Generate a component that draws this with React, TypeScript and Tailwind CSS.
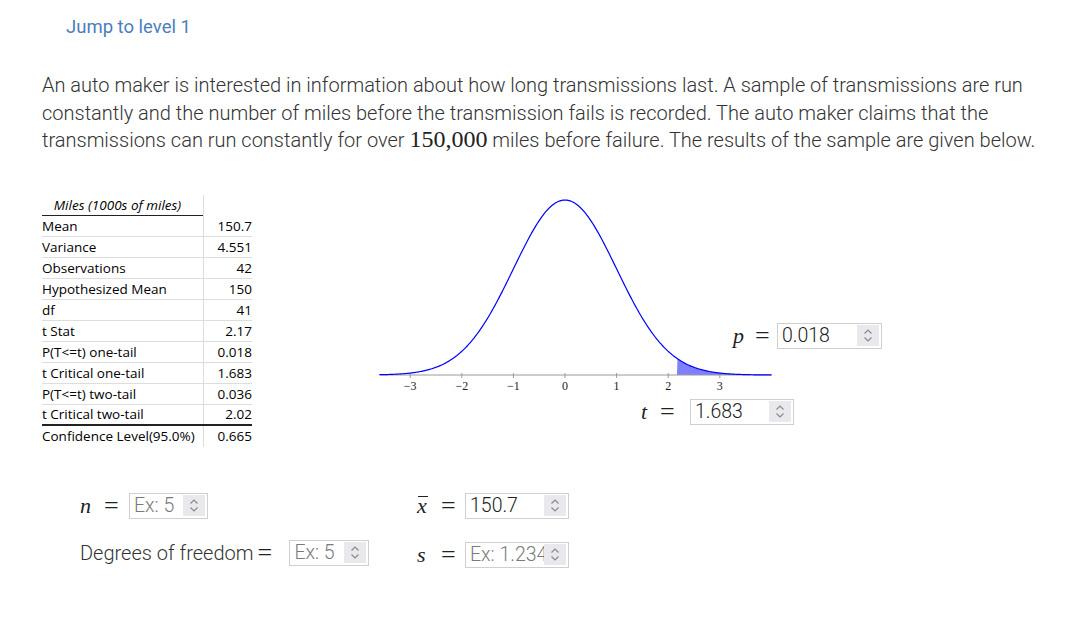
import React from "react";

const rows = [
  ["Mean", "150.7"],
  ["Variance", "4.551"],
  ["Observations", "42"],
  ["Hypothesized Mean", "150"],
  ["df", "41"],
  ["t Stat", "2.17"],
  ["P(T<=t) one-tail", "0.018"],
  ["t Critical one-tail", "1.683"],
  ["P(T<=t) two-tail", "0.036"],
  ["t Critical two-tail", "2.02"],
];

function Spinner() {
  return (
    <div className="flex h-[21px] w-[22px] shrink-0 items-center justify-center bg-[#e9e9ed]">
      <svg width="10" height="15" viewBox="0 0 10 15" fill="none" stroke="#8a8a8a" strokeWidth="1.2">
        <path d="M1.5 5.5 L5 2 L8.5 5.5" />
        <path d="M1.5 9.5 L5 13 L8.5 9.5" />
      </svg>
    </div>
  );
}

function NumBox({ value, placeholder, width }: { value?: string; placeholder?: string; width: string }) {
  return (
    <div className={`flex h-[26px] items-center border border-[#cfcfcf] bg-white pr-[2px] ${width}`}>
      <input
        readOnly
        value={value ?? ""}
        placeholder={placeholder}
        className="min-w-0 flex-1 bg-transparent pl-[4px] font-['Roboto'] text-[19.5px] font-light leading-none text-[#222] outline-none placeholder:text-[#7a7a7a]"
      />
      <Spinner />
    </div>
  );
}

function Curve() {
  const x0 = 187;
  const unit = 51.6;
  const base = 184;
  const peak = 175;
  const pts: string[] = [];
  const fill: string[] = [];
  for (let t = -3.6; t <= 4.0001; t += 0.02) {
    const x = x0 + t * unit;
    const y = base - peak * Math.exp((-t * t) / 2);
    pts.push(`${x.toFixed(2)},${y.toFixed(2)}`);
    if (t >= 2.17) fill.push(`${x.toFixed(2)},${y.toFixed(2)}`);
  }
  const shadeStart = x0 + 2.17 * unit;
  const shade = `M${shadeStart},${base} L${fill.join(" L")} L${x0 + 4 * unit},${base} Z`;
  return (
    <svg width="400" height="210" viewBox="0 0 400 210" className="block">
      <path d={shade} fill="#8080ff" />
      <line x1="2" y1={base} x2="394" y2={base} stroke="#9a9a9a" strokeWidth="1" />
      {[-3, -2, -1, 0, 1, 2, 3].map((n) => (
        <g key={n}>
          <line x1={x0 + n * unit} y1={base - 2} x2={x0 + n * unit} y2={base + 3} stroke="#9a9a9a" strokeWidth="1" />
          <text
            x={x0 + n * unit}
            y={base + 15}
            textAnchor="middle"
            fontFamily="'Liberation Serif', serif"
            fontSize="12"
            fill="#222"
          >
            {n < 0 ? `\u2212${-n}` : n}
          </text>
        </g>
      ))}
      <polyline points={pts.join(" ")} fill="none" stroke="#0000ff" strokeWidth="1.2" />
    </svg>
  );
}

const math = "font-['Liberation_Serif'] text-[22px] italic leading-none text-[#222]";
const eq = "font-['Liberation_Serif'] text-[26px] leading-none text-[#222]";

export default function App() {
  return (
    <div className="min-h-[622px] w-[1084px] bg-white font-['Roboto'] text-[#333]">
      <div className="pl-[66px] pt-[14px] text-[18.5px] leading-[26px] text-[#4b7ebb]">Jump to level 1</div>

      <p className="mt-[32px] pl-[42px] pr-[40px] text-[20px] font-light leading-[27.5px] text-[#333]">
        An auto maker is interested in information about how long transmissions last. A sample of transmissions are run
        constantly and the number of miles before the transmission fails is recorded. The auto maker claims that the
        transmissions can run constantly for over{" "}
        <span className="font-['Liberation_Serif'] text-[24px] font-normal leading-none text-[#222]">150,000</span> miles
        before failure. The results of the sample are given below.
      </p>

      {/* table + graph */}
      <div className="mt-[36px] flex pl-[42px]">
        <div className="mt-[4px] w-[210px] font-['Open_Sans'] text-[13.5px] leading-[20px] text-black">
          <div className="flex">
            <div className="w-[161px] border-b-[1.5px] border-[#222] pr-[10px] text-center italic">Miles (1000s of miles)</div>
            <div className="flex-1 border-l border-[#ddd]" />
          </div>
          {rows.map(([k, v], i) => (
            <div
              key={k}
              className={`flex h-[21px] items-center ${i === rows.length - 1 ? "border-b-[2px] border-[#222]" : "border-b border-[#ddd]"}`}
            >
              <div className="flex h-full w-[161px] items-center">{k}</div>
              <div className="flex h-full flex-1 items-center justify-end border-l border-[#ddd]">{v}</div>
            </div>
          ))}
          <div className="flex h-[21px] items-center">
            <div className="flex h-full w-[161px] items-center">Confidence Level(95.0%)</div>
            <div className="flex h-full flex-1 items-center justify-end border-l border-[#ddd]">0.665</div>
          </div>
        </div>

        <div className="relative ml-[126px] h-[240px] w-[520px]">
          <Curve />
          <div className="absolute left-[355px] top-[132px] flex h-[26px] items-center">
            <span className={`w-[22px] ${math}`}>p</span>
            <span className={`w-[22px] ${eq}`}>=</span>
            <NumBox value="0.018" width="w-[105px]" />
          </div>
          <div className="absolute left-[263px] top-[208px] flex h-[26px] items-center">
            <span className={`w-[19px] ${math}`}>t</span>
            <span className={`w-[30px] ${eq}`}>=</span>
            <NumBox value="1.683" width="w-[104px]" />
          </div>
        </div>
      </div>

      {/* inputs */}
      <div className="mt-[46px] flex pl-[80px]">
        <div className="flex w-[337px] flex-col gap-[21px]">
          <div className="flex h-[26px] items-center">
            <span className={`w-[24px] ${math}`}>n</span>
            <span className={`w-[25px] ${eq}`}>=</span>
            <NumBox placeholder="Ex: 5" width="w-[79px]" />
          </div>
          <div className="flex h-[26px] items-center">
            <span className="text-[20px] font-light leading-none text-[#333]">Degrees of freedom</span>
            <span className={`ml-[4px] w-[32px] ${eq}`}>=</span>
            <NumBox placeholder="Ex: 5" width="w-[80px]" />
          </div>
        </div>
        <div className="flex flex-col gap-[23px]">
          <div className="flex h-[26px] items-center">
            <span className={`w-[24px] ${math}`}>
              <span className="relative inline-block">
                x
                <span className="absolute left-[1px] right-[-1px] top-[1px] h-px bg-[#222]" />
              </span>
            </span>
            <span className={`w-[24px] ${eq}`}>=</span>
            <NumBox value="150.7" width="w-[104px]" />
          </div>
          <div className="flex h-[26px] items-center">
            <span className={`w-[24px] ${math}`}>s</span>
            <span className={`w-[24px] ${eq}`}>=</span>
            <NumBox placeholder="Ex: 1.234" width="w-[104px]" />
          </div>
        </div>
      </div>
    </div>
  );
}
